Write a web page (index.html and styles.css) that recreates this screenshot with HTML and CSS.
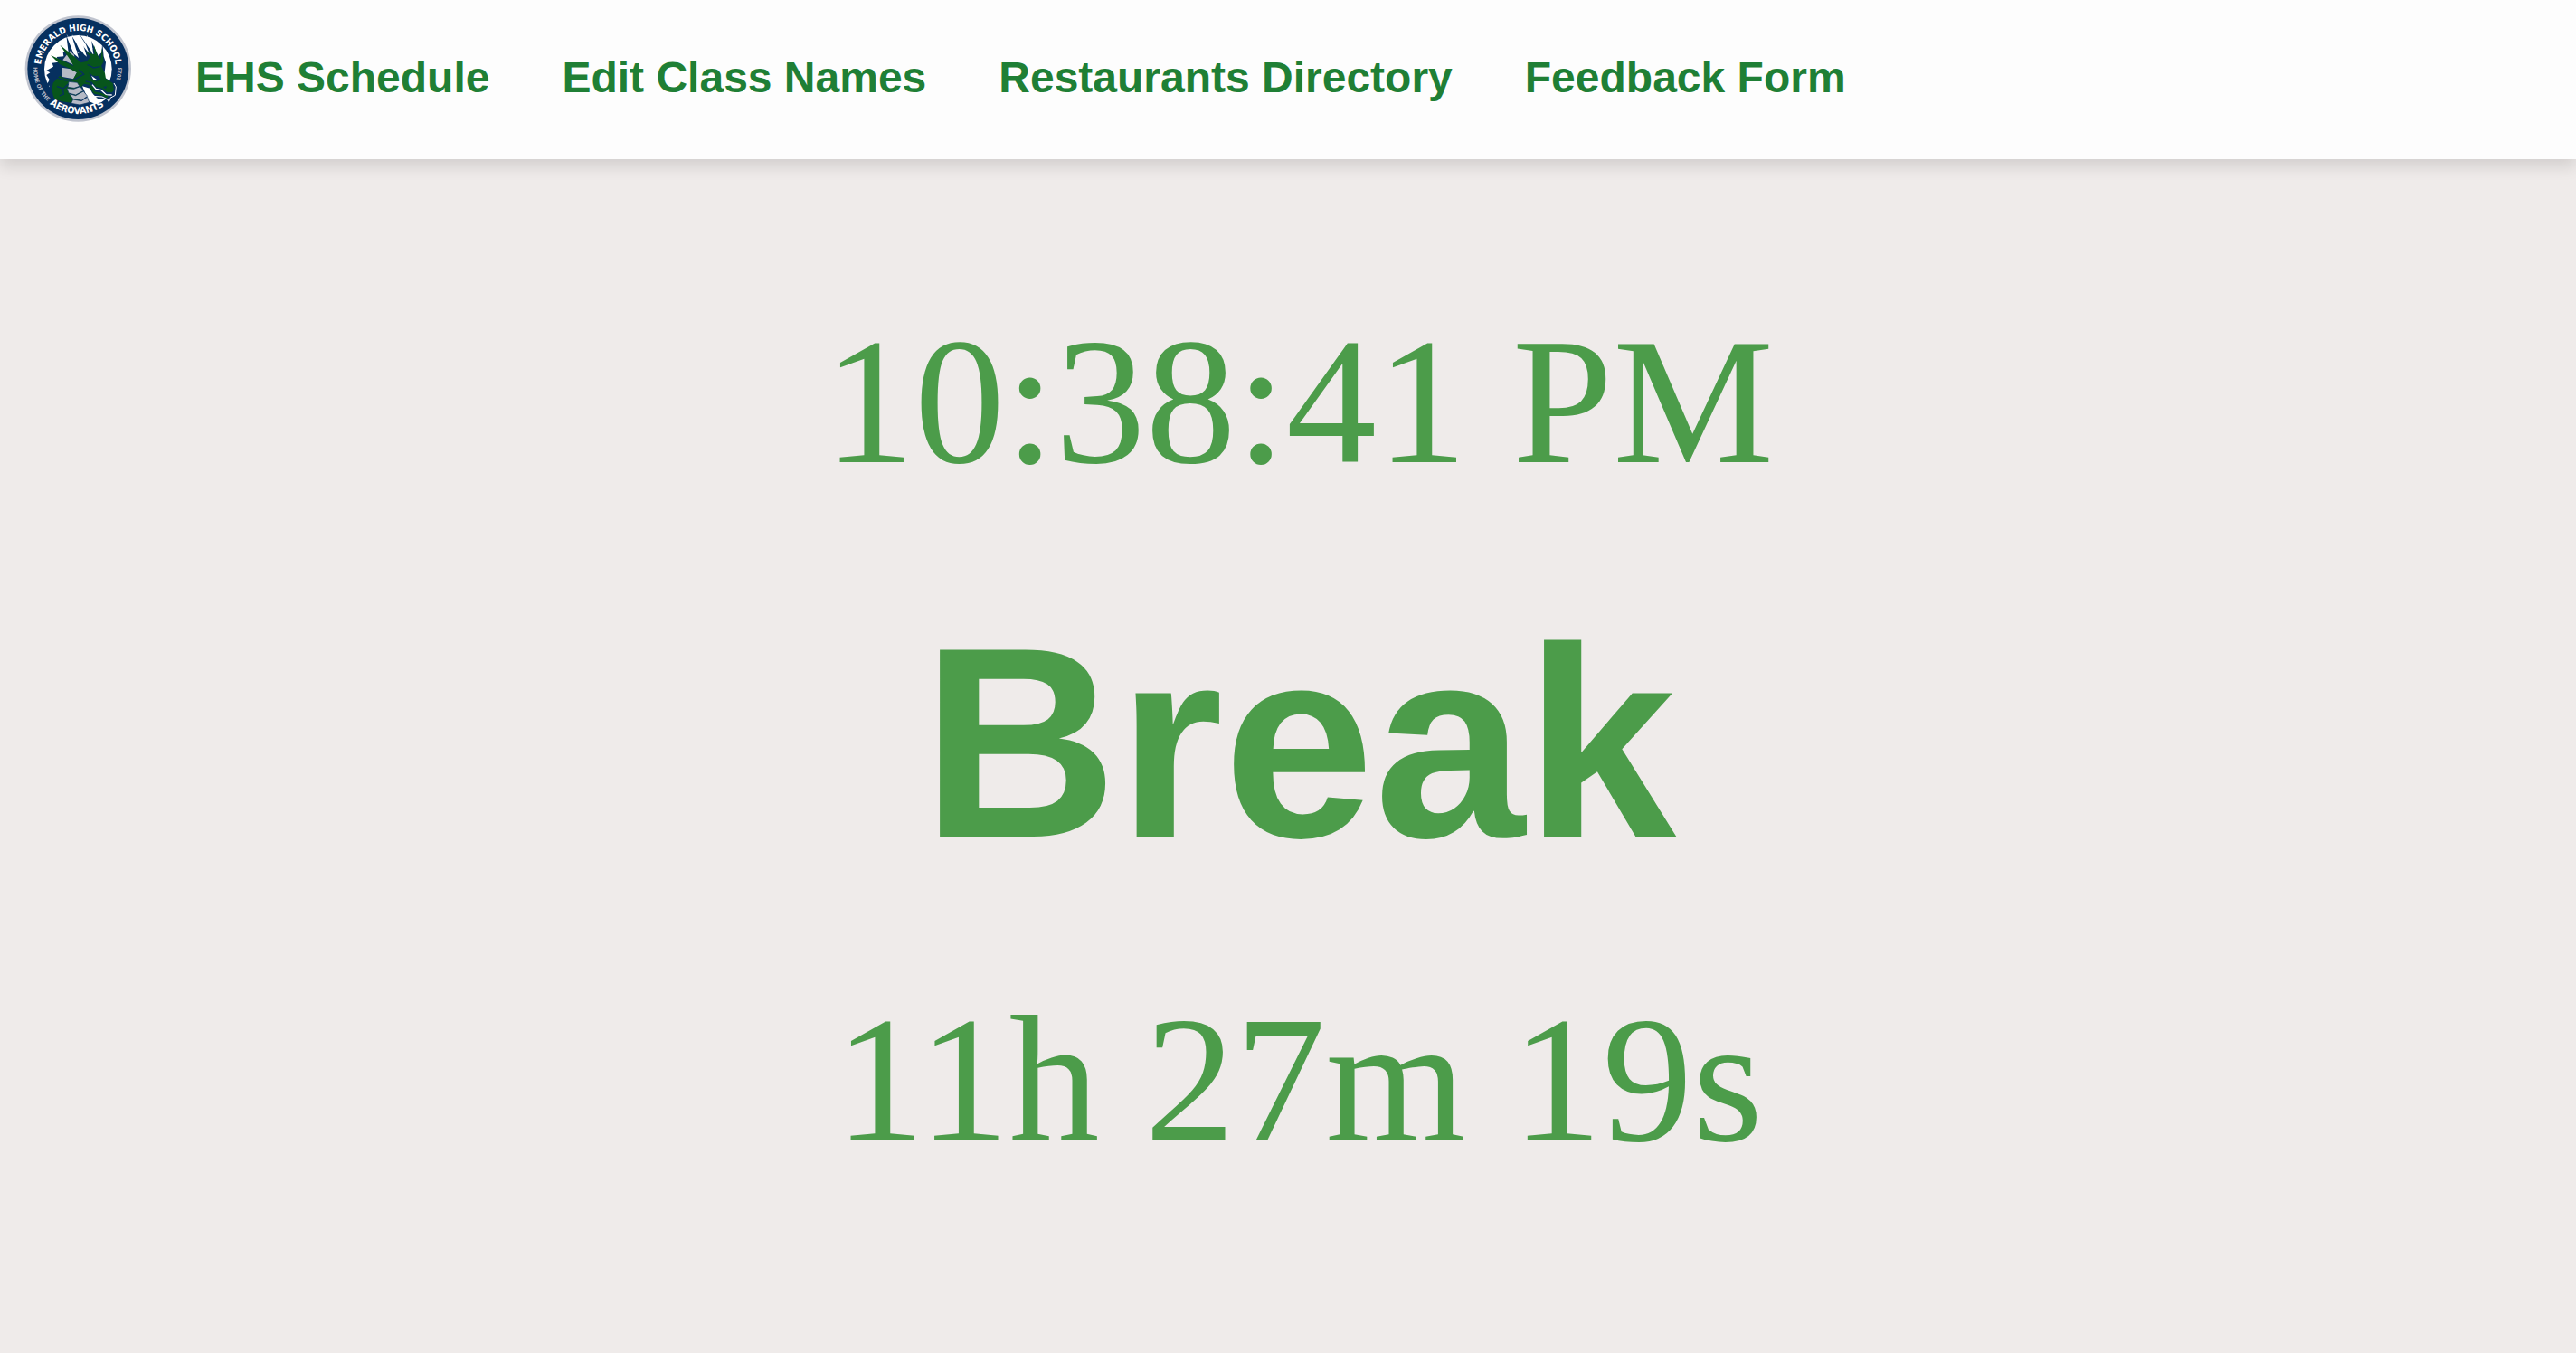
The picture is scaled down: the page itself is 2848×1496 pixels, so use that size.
FILE: index.html
```html
<!DOCTYPE html>
<html lang="en">
<head>
<meta charset="utf-8">
<meta name="viewport" content="width=device-width, initial-scale=1">
<title>EHS Schedule</title>
<link rel="stylesheet" href="styles.css">
</head>
<body>
<header class="site-header">
  <svg class="logo" viewBox="18 18 360 360" role="img" aria-label="Emerald High School, home of the Aerovants">
    <defs>
      <path id="arc-top" d="M81 234A124 124 0 1 1 317 234"/>
      <path id="arc-bottom" d="M49 198A150 150 0 0 0 349 198"/>
      <path id="arc-side" d="M54 170A148 148 0 0 0 116 321"/>
      <path id="arc-year" d="M329 260A144 144 0 0 0 342 170"/>
    </defs>
    <circle cx="199" cy="198" r="176" fill="#bfc3ce"/>
    <circle cx="199" cy="198" r="168" fill="#06305f"/>
    <circle cx="199" cy="199" r="112" fill="#fff"/>
    <path fill="#06305f" d="M118 306L99 282L105 254L92 257L104 235L94 219L106 211L94 204L117 191L113 179L134 176L128 159L151 157L149 143L167 144L160 88L184 148L201 162L179 91L219 151L228 158L206 86L240 136L251 157L243 105L266 155L278 143L279 105L284 157L291 177L285 226L309 241L326 255L324 286L303 300L293 291L257 291L245 278L232 310Z"/>
    <path fill="#fff" d="M160 82L194 139L204 148L184 139ZM179 84L213 132L224 148L203 134ZM203 84L225 118L236 148L214 121ZM227 85L243 112L247 133L236 116Z"/>
    <path fill="#fff" d="M213 256L238 263L252 290L270 299L292 298L276 310L256 315L234 306L226 286Z"/>
    <path fill="#b6bac6" d="M148 169L172 139L186 152L190 188ZM144 194L174 199L195 210L184 232L147 225Z"/>
    <path fill="#07551c" d="M122 299Q108 276 116 245L138 221Q153 234 182 233L195 211L171 197L139 184L108 153L161 178L184 190L173 169L139 119L188 159L208 178L227 174L241 158L226 144L254 151L251 118L263 153L274 167L278 129L284 174L276 189L288 213L291 231L314 246L318 269L309 279L290 277L270 266L251 268L234 251L219 248L205 262L220 282L205 305L180 312L146 307Z"/>
    <path fill="#b6bac6" stroke="#06305f" stroke-width="2" d="M168 241L196 244L204 256L186 262L165 259ZM162 263L185 265L206 257L217 271L191 285L168 279ZM170 281L191 287L217 273L230 289L211 303L182 298ZM182 300L210 305L230 292L236 310L205 318L176 313Z"/>
    <path fill="none" stroke="#06305f" stroke-width="4" d="M127 226Q154 241 185 235L218 216L202 201M129 257L150 264L166 249M137 288L151 282L149 269M224 240L243 243L252 256M230 184L251 195L272 191"/>
    <path fill="#06305f" d="M235 211L249 221L267 222L276 236L258 239L244 232ZM282 259L294 255L291 265Z"/>
    <path fill="#fff" d="M243 221L264 236L250 235Z"/>
    <path fill="none" stroke="#06305f" stroke-width="8" d="M242 246L257 262L276 266L293 280L311 281"/>
    <path fill="none" stroke="#fff" stroke-width="4" d="M246 251L258 265L276 269L292 284L311 285"/>
    <path fill="none" stroke="#07551c" stroke-width="7" d="M239 257L253 277L276 282L297 292"/>
    <path fill="none" stroke="#fff" stroke-width="3" d="M249 289L279 291L297 300L301 308L306 295L322 286L325 258L318 246"/>
    <g class="logo-lettering">
      <text class="logo-name"><textPath href="#arc-top" startOffset="50%">EMERALD HIGH SCHOOL</textPath></text>
      <text class="logo-team"><textPath href="#arc-bottom" startOffset="49%">AEROVANTS</textPath></text>
      <text class="logo-small"><textPath href="#arc-side" startOffset="50%">HOME OF THE</textPath></text>
      <text class="logo-small"><textPath href="#arc-year" startOffset="50%">2023</textPath></text>
    </g>
  </svg>
  <nav class="site-nav" aria-label="Main">
    <a href="#schedule">EHS Schedule</a>
    <a href="#classes">Edit Class Names</a>
    <a href="#restaurants">Restaurants Directory</a>
    <a href="#feedback">Feedback Form</a>
  </nav>
</header>
<main class="schedule" id="schedule">
  <time class="clock">10:38:41 PM</time>
  <h1 class="period">Break</h1>
  <time class="clock">11h 27m 19s</time>
</main>
</body>
</html>
```
FILE: styles.css
```css
* {
  box-sizing: border-box;
}

body {
  margin: 0;
  background: #efebea;
  color: #4c9c4a;
  font-family: "Liberation Serif", "Times New Roman", serif;
}

.site-header {
  display: flex;
  align-items: center;
  gap: 70px;
  padding: 16px 26px 40px;
  background: #fdfdfd;
  box-shadow: 0 8px 16px rgba(0, 0, 0, 0.12);
}

.logo {
  flex: none;
  width: 120px;
  height: 120px;
}

.logo-lettering {
  fill: #fff;
  font-family: "Liberation Sans Narrow", "DejaVu Sans Condensed", "Liberation Sans", Arial, sans-serif;
  font-weight: bold;
  text-anchor: middle;
}

.logo-name {
  font-size: 30px;
}

.logo-team {
  font-size: 32px;
}

.logo-small {
  font-size: 18px;
  fill: #b6bac6;
}

.site-nav {
  display: flex;
  flex-wrap: wrap;
  gap: 80px;
  padding-top: 20px;
}

.site-nav a {
  color: #1f7f35;
  font: bold 48px/56px "Liberation Sans", Arial, sans-serif;
  text-decoration: none;
}

.schedule {
  display: flex;
  flex-direction: column;
  align-items: center;
  padding: 148px 0 148px 24px;
}

.clock {
  font-size: 200px;
  line-height: 240px;
}

.period {
  margin: 77px 0 73px;
  font: bold 300px/360px "Liberation Sans", Arial, sans-serif;
}
```
